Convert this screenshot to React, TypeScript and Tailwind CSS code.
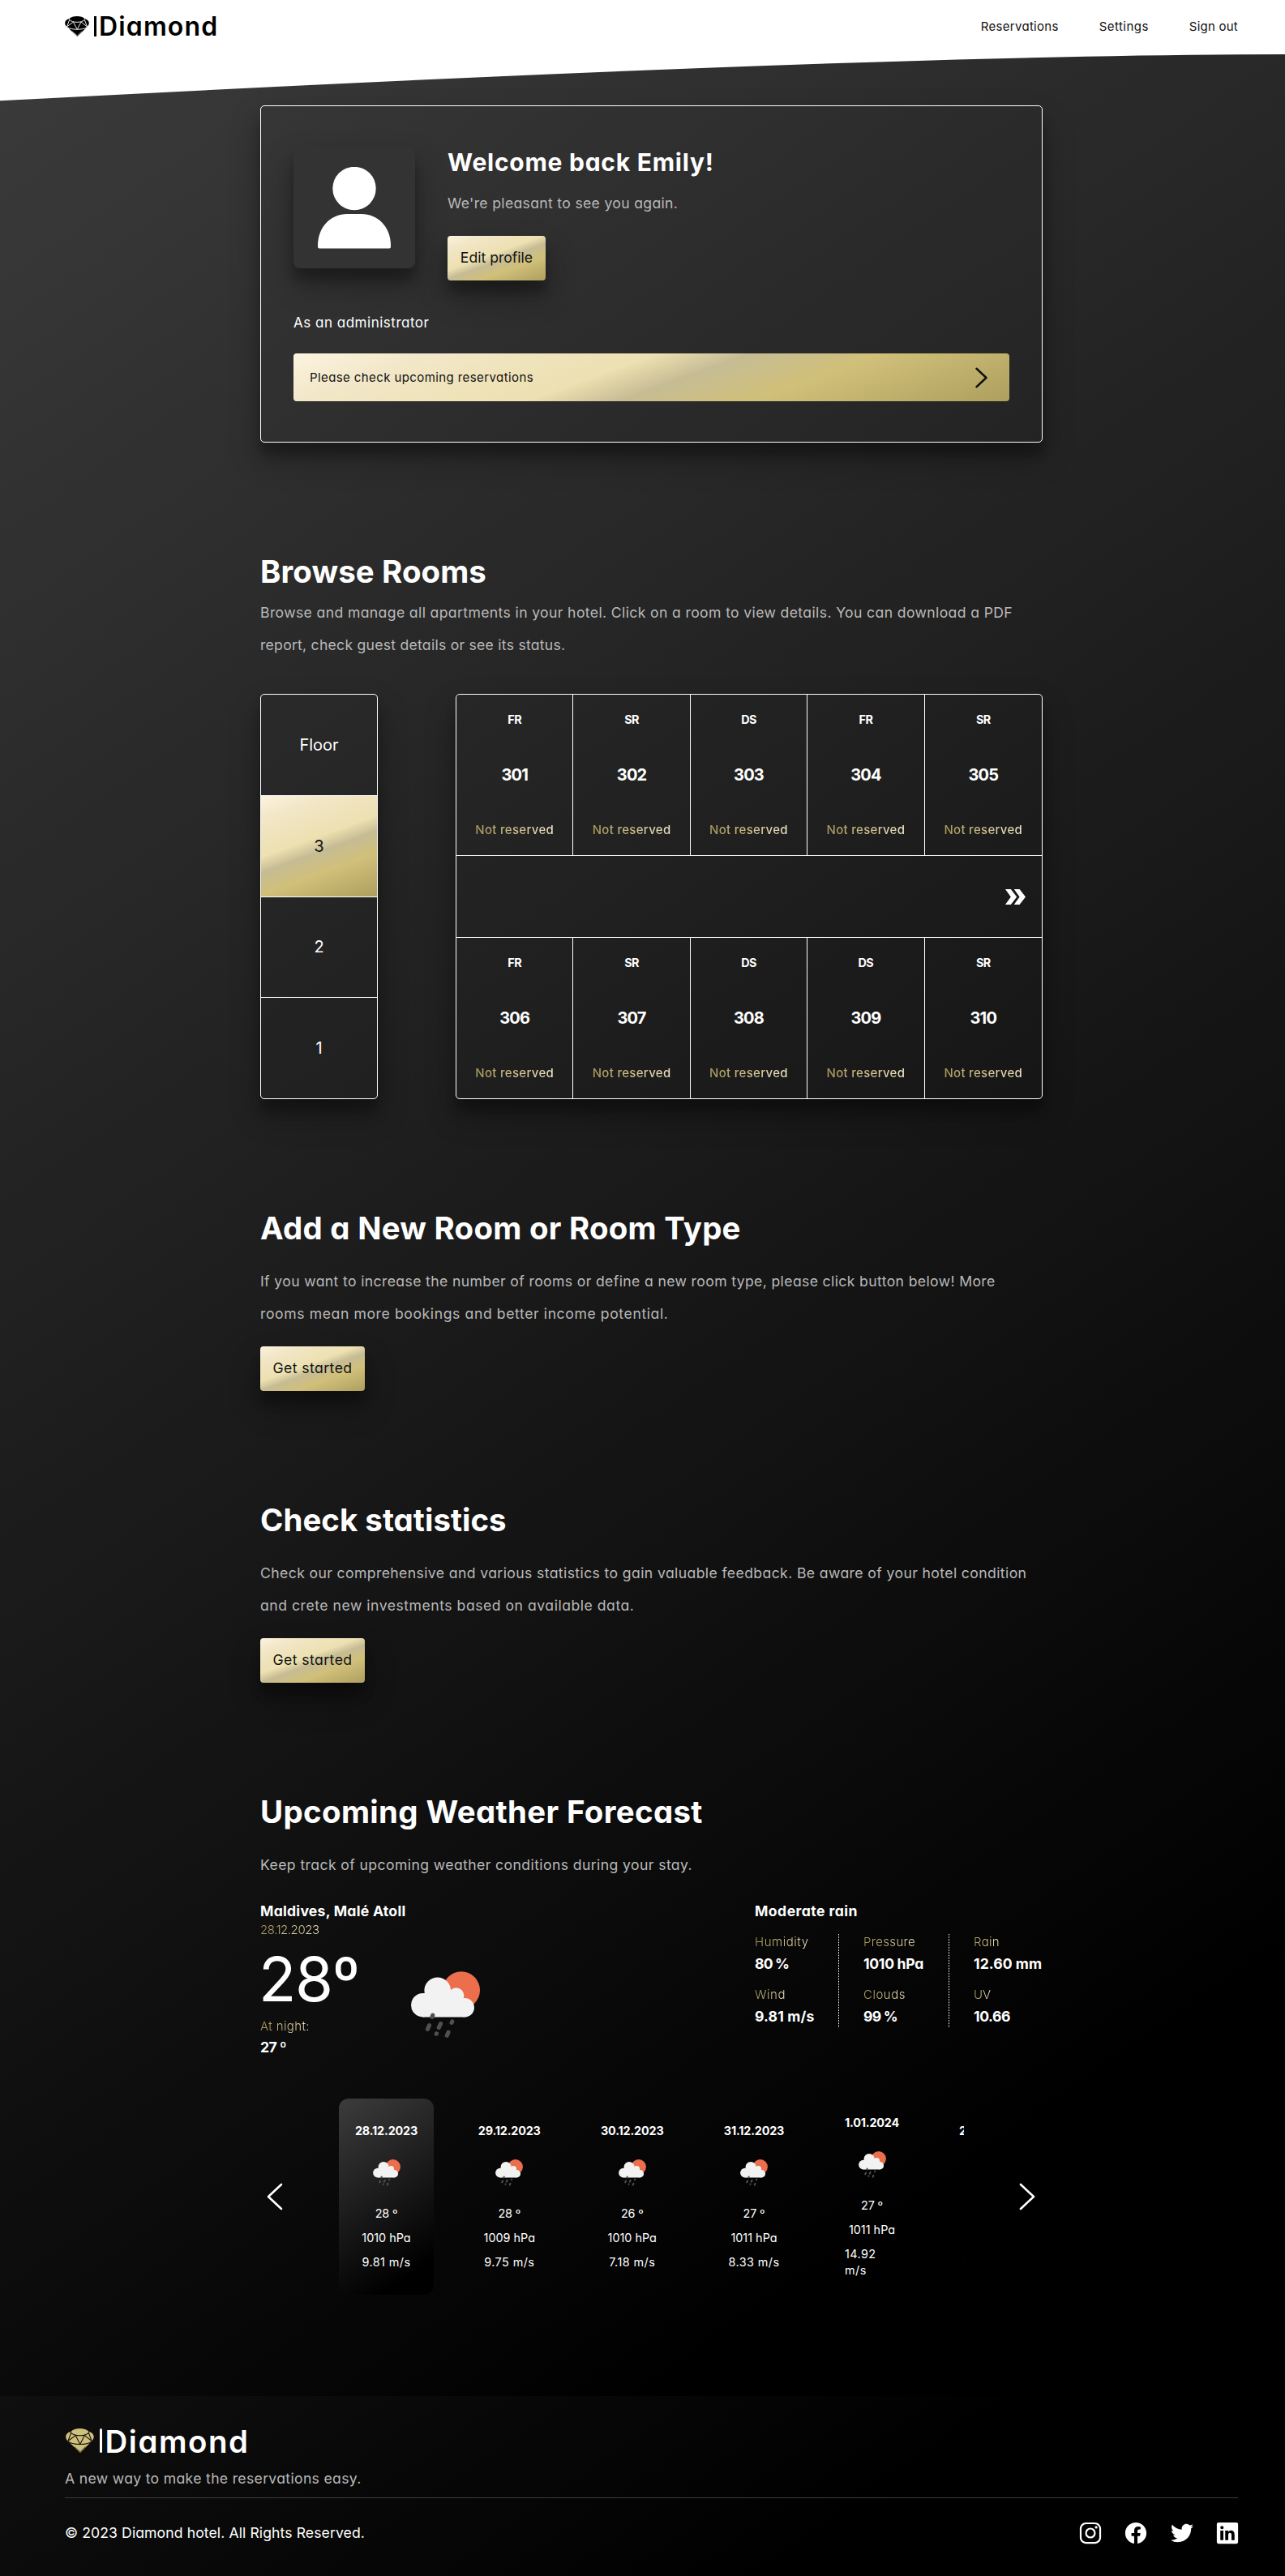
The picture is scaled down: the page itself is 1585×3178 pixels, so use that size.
import type { ReactNode } from "react";
import {
  IoLogoInstagram,
  IoLogoFacebook,
  IoLogoTwitter,
  IoLogoLinkedin,
} from "react-icons/io5";

const GOLD =
  "bg-[linear-gradient(160deg,#fdf4e1_0%,#f2e7c8_16%,#ede0b1_43%,#c6bc94_54%,#d0c07a_69%,#ae9f5f_100%)]";
const GOLD_TEXT =
  "bg-[linear-gradient(90deg,#a3955a_0%,#c9bb80_40%,#f0e5c4_100%)] bg-clip-text text-transparent";
const SHADOW = "shadow-[0_19px_38px_rgba(0,0,0,0.3),0_15px_12px_rgba(0,0,0,0.22)]";

function Gem({ className, line }: { className: string; line: string }) {
  return (
    <svg viewBox="0 0 36 30" className={className} preserveAspectRatio="none">
      <path
        fill="currentColor"
        d="M6.5 4C9 1.3 13 0 18 0s9 1.3 11.500 4C33 4.500 36 7.500 35.700 10.500c-.1 2.500-2 4.500-4 6.500L18.500 30 5 17.500C2.500 15.500.2 13.500.2 10.500.2 7 3 4.500 6.500 4Z"
      />
      <g fill="none" stroke={line} strokeWidth="1.1">
        <path d="M6 4.300C9 8 13 8.800 18 8.800S27 8 30 4.300" />
        <path d="M6.800 5.500 3 15.500 12.500 8.600 18.300 19.500 24 8.600 33 15.500 29.200 5.500" />
        <path d="M3.500 16.500C10 20.500 27 20.500 32.500 16.500" />
        <path d="M11 22.500 18.500 28.800 25 22.500" strokeWidth=".7" />
      </g>
    </svg>
  );
}

function WeatherIcon({ className }: { className: string }) {
  return (
    <svg viewBox="0 0 85 83" className={className}>
      <circle cx="62" cy="23.300" r="23" fill="#ec6e4c" />
      <g fill="#f2f2f2">
        <circle cx="14.700" cy="41.700" r="14.700" />
        <circle cx="32.700" cy="23.700" r="16.300" />
        <circle cx="55.700" cy="30" r="9.700" />
        <circle cx="66.300" cy="44.700" r="11.700" />
        <path d="M14.700 27h18l23-3 9 9.500 1.600 0v22.900H14.700z" />
      </g>
      <g stroke="#505050" strokeWidth="5.200" strokeLinecap="round">
        <path d="M26.700 54.300l-.7 2M22.500 66.700l-2 4.600M36.500 64.700l-2.200 4.800M50.700 61.900l-.6 1.500M31.400 76.800l-.1.400M46 75.200l-1.700 4" />
      </g>
    </svg>
  );
}

function Chevron({ className, width, left }: { className: string; width: number; left?: boolean }) {
  return (
    <svg
      viewBox="0 0 20 34"
      className={className}
      fill="none"
      stroke="currentColor"
      strokeWidth={width}
      strokeLinecap="round"
      strokeLinejoin="round"
    >
      <path d={left ? "M18 2 2 17l16 15" : "M2 2l16 15L2 32"} />
    </svg>
  );
}

function GoldButton({ className, children }: { className: string; children: ReactNode }) {
  return (
    <button className={`flex h-[55px] items-center justify-center rounded-[4px] text-[17.6px] text-[#111] ${GOLD} ${SHADOW} ${className}`}>
      {children}
    </button>
  );
}

function Title({ className, children }: { className: string; children: ReactNode }) {
  return <h2 className={`text-[38.4px] leading-[48px] font-bold text-white ${className}`}>{children}</h2>;
}

type Room = { type: string; no: string };
const UPPER: Room[] = [
  { type: "FR", no: "301" },
  { type: "SR", no: "302" },
  { type: "DS", no: "303" },
  { type: "FR", no: "304" },
  { type: "SR", no: "305" },
];
const LOWER: Room[] = [
  { type: "FR", no: "306" },
  { type: "SR", no: "307" },
  { type: "DS", no: "308" },
  { type: "DS", no: "309" },
  { type: "SR", no: "310" },
];

function RoomRow({ rooms }: { rooms: Room[] }) {
  return (
    <div className="grid flex-1 grid-cols-5 divide-x divide-white">
      {rooms.map((r) => (
        <div key={r.no} className="flex flex-col items-center justify-between py-[21px] text-white">
          <span className="text-[14.4px] leading-5 font-bold tracking-[-0.04em]">{r.type}</span>
          <span className="text-[20px] leading-7 font-bold tracking-[-0.04em]">{r.no}</span>
          <span className={`text-[15px] leading-5 font-medium tracking-[0.02em] ${GOLD_TEXT}`}>Not reserved</span>
        </div>
      ))}
    </div>
  );
}

const DETAILS = [
  {
    box: "w-[104px] border-r border-dotted border-white",
    items: [
      { label: "Humidity", value: "80 %", l: "tracking-[0.036em]", v: "tracking-[-0.045em]" },
      { label: "Wind", value: "9.81 m/s", l: "tracking-[0.036em]", v: "tracking-[0.009em]" },
    ],
  },
  {
    box: "ml-[30px] w-[106px] border-r border-dotted border-white",
    items: [
      { label: "Pressure", value: "1010 hPa", l: "tracking-[0.022em]", v: "tracking-[-0.017em]" },
      { label: "Clouds", value: "99 %", l: "tracking-[0.034em]", v: "tracking-[-0.045em]" },
    ],
  },
  {
    box: "ml-[30px] w-[85px]",
    items: [
      { label: "Rain", value: "12.60 mm", l: "tracking-[0.022em]", v: "tracking-[0.003em]" },
      { label: "UV", value: "10.66", l: "", v: "tracking-[-0.025em]" },
    ],
  },
];

const DAYS = [
  { date: "28.12.2023", temp: "28 º", hpa: "1010 hPa", wind: "9.81 m/s", w: "w-[117px]" },
  { date: "29.12.2023", temp: "28 º", hpa: "1009 hPa", wind: "9.75 m/s", w: "w-[116.5px]" },
  { date: "30.12.2023", temp: "26 º", hpa: "1010 hPa", wind: "7.18 m/s", w: "w-[116.5px]" },
  { date: "31.12.2023", temp: "27 º", hpa: "1011 hPa", wind: "8.33 m/s", w: "w-[114px]" },
  { date: "1.01.2024", temp: "27 º", hpa: "1011 hPa", wind: "14.92 m/s", w: "w-[107px]" },
  { date: "2.01.2024", temp: "27 º", hpa: "1011 hPa", wind: "9.12 m/s", w: "w-[108px]" },
];

export default function App() {
  return (
    <div className="flex h-[3178px] w-full flex-col overflow-hidden bg-black font-['Inter',sans-serif] [font-feature-settings:'cv11']">
      <div className="relative flex h-[2956px] flex-col bg-[linear-gradient(145deg,#3c3c3c_0%,#000_87%)]">
        <svg viewBox="0 0 1585 125" className="absolute top-0 left-0 h-[125px] w-full" preserveAspectRatio="none">
          <path d="M0 0H1585V67Q1081 67 0 124.300Z" fill="#fff" />
        </svg>

        <header className="relative flex h-[65px] items-center justify-between pr-[58px] pl-20 text-black">
          <div className="flex items-center">
            <Gem className="h-[25px] w-[30px]" line="#fff" />
            <span className="ml-[6px] h-[25px] w-[2.500px] bg-black" />
            <span className="ml-[3.500px] text-[32px] leading-[34px] font-semibold tracking-[0.036em]">Diamond</span>
          </div>
          <nav className="flex gap-[50px] text-[15px] leading-5 text-[#111]">
            <a className="tracking-[0.02em]">Reservations</a>
            <a className="tracking-[0.03em]">Settings</a>
            <a className="tracking-[0.016em]">Sign out</a>
          </nav>
        </header>

        <main className="relative mt-[65px] ml-[321px] w-[965px]">
          <section className={`h-[416px] rounded-[5px] border border-white px-10 py-[50px] ${SHADOW}`}>
            <div className="flex gap-10">
              <div className={`flex size-[150px] items-start justify-center rounded-lg bg-[#333] pt-[25px] ${SHADOW}`}>
                <svg viewBox="0 0 90 101" className="h-[101px] w-[90px]" fill="#fff">
                  <circle cx="45" cy="26.500" r="26.700" />
                  <path d="M0 98.500V97C0 73 17 58 36 58h18c19 0 36 15 36 39v1.500q0 2-2 2H2q-2 0-2-2Z" />
                </svg>
              </div>
              <div className="pt-px">
                <h1 className="text-[30px] leading-9 font-bold tracking-[0.025em] text-white">Welcome back Emily!</h1>
                <p className="mt-5 text-[17.6px] leading-[26px] tracking-[0.0185em] text-[#b9b9b9]">
                  We're pleasant to see you again.
                </p>
                <GoldButton className="mt-[27px] w-[121px]">Edit profile</GoldButton>
              </div>
            </div>
            <p className="mt-10 text-[17px] leading-6 tracking-[0.03em] text-white">As an administrator</p>
            <div className={`mt-[26px] flex h-[59px] items-center justify-between rounded-[4px] pr-[27px] pl-5 text-[#111] ${GOLD}`}>
              <span className="text-[15px] leading-5 tracking-[0.027em]">Please check upcoming reservations</span>
              <Chevron className="h-[26px] w-[15px]" width={3.2} />
            </div>
          </section>

          <section className="pt-[135px]">
            <Title className="tracking-[0.003em]">Browse Rooms</Title>
            <p className="mt-[7px] text-[17.6px] leading-10 text-[#b9b9b9]">
              <span className="block tracking-[0.021em]">
                Browse and manage all apartments in your hotel. Click on a room to view details. You can download a PDF
              </span>
              <span className="block tracking-[0.0145em]">report, check guest details or see its status.</span>
            </p>
            <div className="mt-10 flex h-[500px] justify-between">
              <div
                className={`flex w-[145px] flex-col divide-y divide-white overflow-hidden rounded-[5px] border border-white text-[20px] text-white ${SHADOW}`}
              >
                <div className="flex flex-1 items-center justify-center">Floor</div>
                <div className={`flex flex-1 items-center justify-center text-[#111] ${GOLD}`}>3</div>
                <div className="flex flex-1 items-center justify-center">2</div>
                <div className="flex flex-1 items-center justify-center">1</div>
              </div>
              <div className={`flex w-[724px] flex-col divide-y divide-white rounded-[5px] border border-white ${SHADOW}`}>
                <RoomRow rooms={UPPER} />
                <div className="flex h-[101px] items-center justify-end pr-5 text-white">
                  <svg viewBox="0 0 25 19" className="h-[19px] w-[25px]" fill="currentColor">
                    <path d="M0 0h6.800L14.200 9.500 6.800 19H0L6.800 9.500ZM10.800 0h6.800L25 9.500 17.600 19h-6.800l6.800-9.500Z" />
                  </svg>
                </div>
                <RoomRow rooms={LOWER} />
              </div>
            </div>
          </section>

          <section className="pt-[135px]">
            <Title className="tracking-[0.007em]">Add a New Room or Room Type</Title>
            <p className="mt-[22px] text-[17.6px] leading-10 text-[#b9b9b9]">
              <span className="block tracking-[0.021em]">
                If you want to increase the number of rooms or define a new room type, please click button below! More
              </span>
              <span className="block tracking-[0.034em]">rooms mean more bookings and better income potential.</span>
            </p>
            <GoldButton className="mt-5 w-[129px] tracking-[0.025em]">Get started</GoldButton>
          </section>

          <section className="pt-[135px]">
            <Title className="tracking-[0.001em]">Check statistics</Title>
            <p className="mt-[22px] text-[17.6px] leading-10 text-[#b9b9b9]">
              <span className="block tracking-[0.0222em]">
                Check our comprehensive and various statistics to gain valuable feedback. Be aware of your hotel condition
              </span>
              <span className="block tracking-[0.0295em]">and crete new investments based on available data.</span>
            </p>
            <GoldButton className="mt-5 w-[129px] tracking-[0.025em]">Get started</GoldButton>
          </section>

          <section className="pt-[135px]">
            <Title className="tracking-[0.0095em]">Upcoming Weather Forecast</Title>
            <p className="mt-[22px] text-[17.6px] leading-10 tracking-[0.023em] text-[#b9b9b9]">
              Keep track of upcoming weather conditions during your stay.
            </p>

            <div className="mt-[25px] flex justify-between text-[17.6px] leading-6 font-bold text-white">
              <div>
                <p className="tracking-[0.0145em]">Maldives, Malé Atoll</p>
                <p className={`mt-px w-fit text-[15px] leading-5 font-light tracking-[-0.03em] ${GOLD_TEXT}`}>28.12.2023</p>
                <div className="mt-[10px] flex">
                  <div className="w-[120px]">
                    <p className="-ml-0.5 text-[76px] leading-[80px] font-normal tracking-[-0.018em] whitespace-nowrap">28º</p>
                    <p className={`mt-[9px] w-fit text-[15px] leading-5 font-light tracking-[0.025em] ${GOLD_TEXT}`}>At night:</p>
                    <p className="mt-1 tracking-[-0.03em]">27 º</p>
                  </div>
                  <WeatherIcon className="mt-[31px] ml-[66px] h-[83px] w-[85px]" />
                </div>
              </div>
              <div>
                <p className="tracking-[0.026em]">Moderate rain</p>
                <div className="mt-4 flex h-[115px]">
                  {DETAILS.map((col, i) => (
                    <div key={i} className={`flex flex-col gap-4 ${col.box}`}>
                      {col.items.map((it) => (
                        <div key={it.label} className="whitespace-nowrap">
                          <p className={`w-fit text-[15px] leading-5 font-light ${it.l} ${GOLD_TEXT}`}>{it.label}</p>
                          <p className={`mt-[5px] ${it.v}`}>{it.value}</p>
                        </div>
                      ))}
                    </div>
                  ))}
                </div>
              </div>
            </div>

            <div className="mt-[51px] flex items-center text-white">
              <Chevron className="ml-2 h-[34px] w-5" width={2.6} left />
              <div className="ml-[69px] flex w-[771px] gap-[35px] overflow-hidden">
                {DAYS.map((d, i) => (
                  <div
                    key={d.date}
                    className={`flex h-[242px] shrink-0 flex-col items-center justify-center rounded-xl px-5 text-[14.4px] leading-5 ${d.w} ${
                      i === 0 ? "bg-[linear-gradient(145deg,#3c3c3c_0%,#000_86%)]" : ""
                    }`}
                  >
                    <p className="font-bold tracking-[-0.012em] whitespace-nowrap">{d.date}</p>
                    <div className="flex h-[82px] items-center">
                      <WeatherIcon className="h-[33px] w-[34px]" />
                    </div>
                    <p className="tracking-[-0.01em]">{d.temp}</p>
                    <p className="mt-[10px] whitespace-nowrap">{d.hpa}</p>
                    <p className="mt-[10px] w-fit tracking-[0.03em]">
                      {d.wind === "14.92 m/s" ? <span className="block w-[67px]">14.92<br />m/s</span> : d.wind}
                    </p>
                  </div>
                ))}
              </div>
              <Chevron className="ml-[68px] h-[34px] w-5" width={2.6} />
            </div>
          </section>
        </main>
      </div>

      <footer className="flex h-[222px] flex-col bg-[linear-gradient(145deg,#0f0f0f_0%,#000_68%)] pt-10 pr-[58px] pl-20">
        <div className="flex h-[30px] items-center text-white">
          <Gem className="ml-px h-[30px] w-[35px] text-[#d0c07a]" line="#111" />
          <span className="ml-[7px] h-[30px] w-[2.500px] rounded bg-white" />
          <span className="mt-0.5 ml-1 text-[38.4px] leading-10 font-semibold tracking-[0.041em]">Diamond</span>
        </div>
        <p className="mt-[17px] text-[17.6px] leading-[30px] tracking-[0.0185em] text-[#b9b9b9]">
          A new way to make the reservations easy.
        </p>
        <div className="mt-2 flex items-center justify-between border-t border-[#3c3c3c] pt-[28px] text-white">
          <p className="text-[17.6px] leading-[30px] tracking-[0.0055em]">© 2023 Diamond hotel. All Rights Reserved.</p>
          <div className="-mr-0.5 flex gap-[26.300px]">
            <IoLogoInstagram size={30} />
            <IoLogoFacebook size={30} />
            <IoLogoTwitter size={30} />
            <IoLogoLinkedin size={30} />
          </div>
        </div>
      </footer>
    </div>
  );
}
